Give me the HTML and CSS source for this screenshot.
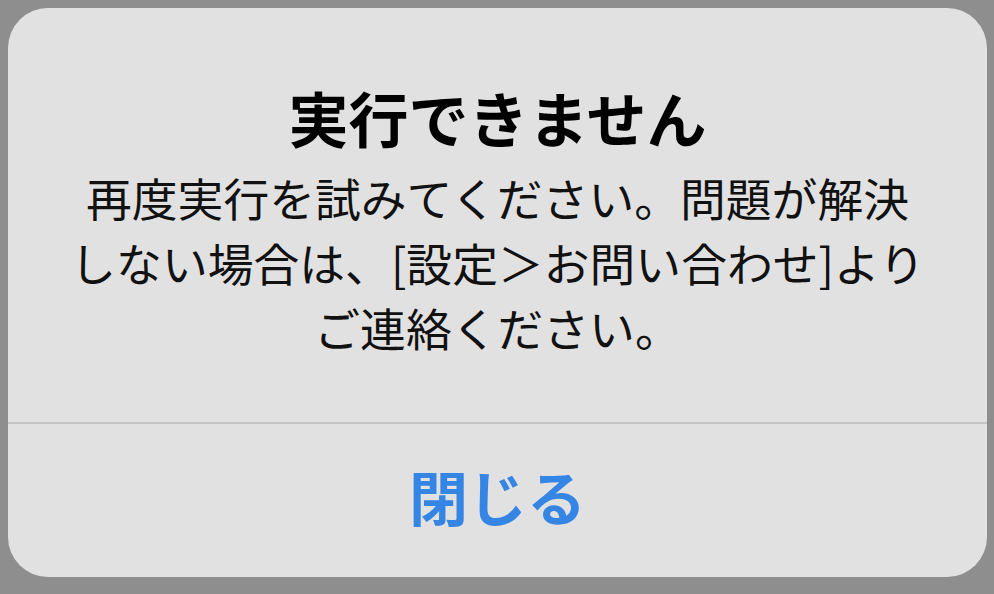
FILE: index.html
```html
<!DOCTYPE html>
<html lang="ja">
<head>
<meta charset="utf-8">
<link rel="stylesheet" href="styles.css">
</head>
<body>
<div class="dialog">
  <div class="content">
    <div class="title">実行できません</div>
    <div class="message">再度実行を試みてください。問題が解決<br>しない場合は、[設定＞お問い合わせ]より<br>ご連絡ください。</div>
  </div>
  <div class="divider"></div>
  <div class="actions">
    <div class="button">閉じる</div>
  </div>
</div>
</body>
</html>
```

FILE: styles.css
```css
html, body {
  margin: 0;
  padding: 0;
  width: 994px;
  height: 594px;
  background: #8e8e8e;
  overflow: hidden;
}
body {
  padding: 8px 7px 17px 8px;
  box-sizing: border-box;
  font-family: "Noto Sans CJK JP", "Noto Sans", sans-serif;
}
.dialog {
  width: 100%;
  height: 100%;
  background: #e1e1e1;
  border-radius: 40px;
  display: flex;
  flex-direction: column;
  overflow: hidden;
}
.content {
  height: 414px;
  box-sizing: border-box;
  padding-top: 74px;
  display: flex;
  flex-direction: column;
  align-items: center;
  text-align: center;
}
.title {
  font-size: 60px;
  font-weight: 700;
  line-height: 70px;
  color: #000;
}
.message {
  margin-top: 13px;
  font-size: 45.8px;
  line-height: 65px;
  color: #111;
  white-space: nowrap;
}
.divider {
  height: 2px;
  background: #c4c4c4;
}
.actions {
  flex: 1;
  display: flex;
  align-items: center;
  justify-content: center;
}
.button {
  font-size: 59px;
  font-weight: 700;
  color: #3585e4;
  line-height: 70px;
  padding-bottom: 10px;
}
```
